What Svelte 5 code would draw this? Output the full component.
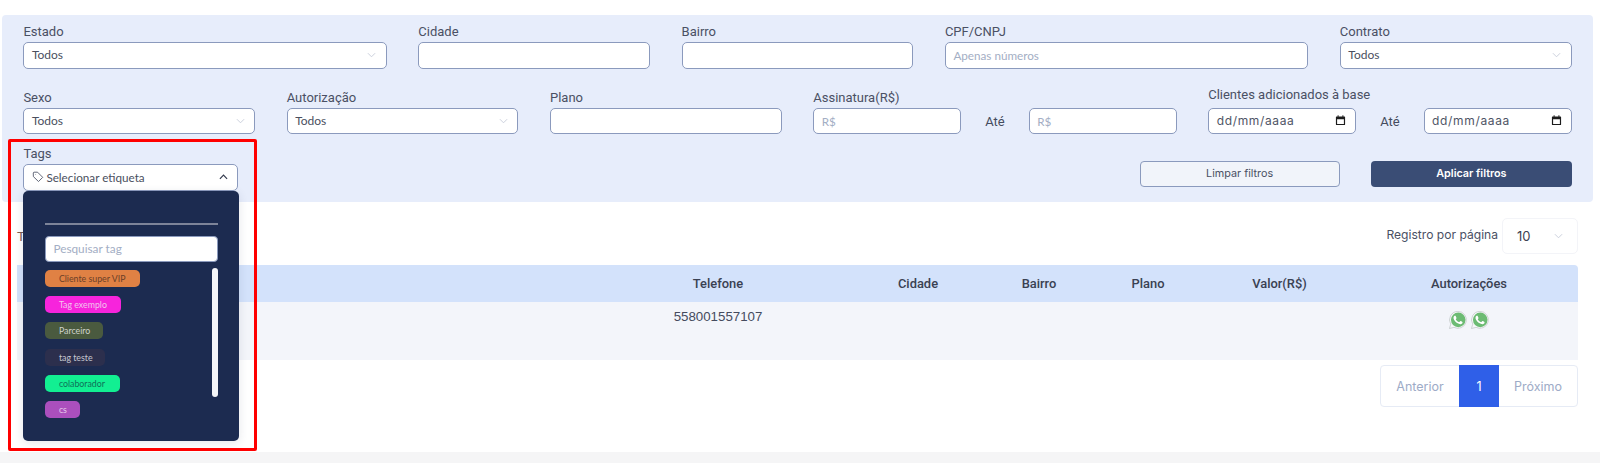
<script>
  const tags = [
    { name: 'Cliente super VIP', cls: 'orange', w: 95 },
    { name: 'Tag exemplo', cls: 'pink', w: 76 },
    { name: 'Parceiro', cls: 'olive', w: 58.5 },
    { name: 'tag teste', cls: 'slate', w: 60 },
    { name: 'colaborador', cls: 'green', w: 75 },
    { name: 'cs', cls: 'purple', w: 35.5 }
  ];
  const heads = ['', 'Telefone', 'Cidade', 'Bairro', 'Plano', 'Valor(R$)', 'Autorizações'];
</script>

{#snippet chevron()}
  <svg class="chev" viewBox="0 0 10 6" aria-hidden="true"><path d="M1 1l4 4 4-4" /></svg>
{/snippet}

{#snippet calendar()}
  <svg class="cal" viewBox="0 0 12 12" aria-hidden="true">
    <path d="M1 2.2c0-.4.3-.7.7-.7h8.6c.4 0 .7.3.7.7v8.1c0 .4-.3.7-.7.7H1.700c-.4 0-.7-.3-.7-.7zM2.300 4.600v5.100h7.400V4.600z" />
    <rect x="2.800" y=".4" width="1.200" height="1.600" /><rect x="8" y=".4" width="1.200" height="1.600" />
  </svg>
{/snippet}

{#snippet whatsapp()}
  <svg class="wa" viewBox="0 0 24 24" aria-hidden="true">
    <path class="wa-rim" d="M12 .5A11.300 11.300 0 0 0 2.300 17.600L.6 23.400l6-1.600A11.300 11.300 0 1 0 12 .5z" />
    <circle class="wa-fill" cx="12.300" cy="11.800" r="9.700" />
    <path class="wa-phone" d="M17.472 14.382c-.297-.149-1.758-.867-2.03-.967-.273-.099-.471-.148-.67.15-.197.297-.767.966-.94 1.164-.173.199-.347.223-.644.075-.297-.15-1.255-.463-2.39-1.475-.883-.788-1.48-1.761-1.653-2.059-.173-.297-.018-.458.13-.606.134-.133.298-.347.446-.52.149-.174.198-.298.298-.497.099-.198.05-.371-.025-.52-.075-.149-.669-1.612-.916-2.207-.242-.579-.487-.5-.669-.51-.173-.008-.371-.01-.57-.01-.198 0-.52.074-.792.372-.272.297-1.04 1.016-1.04 2.479 0 1.462 1.065 2.875 1.213 3.074.149.198 2.096 3.2 5.077 4.487.709.306 1.262.489 1.694.625.712.227 1.36.195 1.871.118.571-.085 1.758-.719 2.006-1.413.248-.694.248-1.289.173-1.413-.074-.124-.272-.198-.57-.347z" />
  </svg>
{/snippet}

<div class="page">
  <section class="filters">
    <div class="row first">
      <div class="field c3"><span class="label">Estado</span><div class="control select"><span>Todos</span>{@render chevron()}</div></div>
      <div class="field c2"><span class="label">Cidade</span><div class="control"></div></div>
      <div class="field c2"><span class="label">Bairro</span><div class="control"></div></div>
      <div class="field c3"><span class="label">CPF/CNPJ</span><div class="control ph">Apenas números</div></div>
      <div class="field c2"><span class="label">Contrato</span><div class="control select"><span>Todos</span>{@render chevron()}</div></div>
    </div>
    <div class="row second">
      <div class="field c2"><span class="label">Sexo</span><div class="control select"><span>Todos</span>{@render chevron()}</div></div>
      <div class="field c2"><span class="label">Autorização</span><div class="control select"><span>Todos</span>{@render chevron()}</div></div>
      <div class="field c2"><span class="label">Plano</span><div class="control"></div></div>
      <div class="field c3">
        <span class="label">Assinatura(R$)</span>
        <div class="range">
          <div class="control ph">R$</div><span class="ate">Até</span><div class="control ph">R$</div>
        </div>
      </div>
      <div class="field c3">
        <span class="label raised">Clientes adicionados à base</span>
        <div class="range">
          <div class="control date"><span>dd/mm/aaaa</span>{@render calendar()}</div><span class="ate">Até</span><div class="control date"><span>dd/mm/aaaa</span>{@render calendar()}</div>
        </div>
      </div>
    </div>
    <div class="third">
      <div class="field tags">
        <span class="label">Tags</span>
        <div class="control tag-select">
          <svg class="tag-icon" viewBox="0 0 14 14" aria-hidden="true"><path d="M1.500 2.300c0-.5.4-.9.9-.9h4.100l6 6-4.900 4.900-6-5.800z" /><circle cx="4.300" cy="4.200" r=".5" /></svg>
          <span>Selecionar etiqueta</span>
          <svg class="chev up" viewBox="0 0 10 6" aria-hidden="true"><path d="M1 5l4-4 4 4" /></svg>
        </div>
        <div class="menu">
          <hr />
          <div class="search">Pesquisar tag</div>
          <div class="tag-list">
            {#each tags as t}
              <span class="pill {t.cls}" style="width:{t.w}px">{t.name}</span>
            {/each}
            <span class="thumb"></span>
          </div>
        </div>
      </div>
      <div class="actions">
        <button class="clear">Limpar filtros</button>
        <button class="apply">Aplicar filtros</button>
      </div>
    </div>
  </section>

  <div class="toolbar">
    <span class="total">Total: 1</span>
    <div class="per-page">
      <span class="per-label">Registro por página</span>
      <div class="page-size"><span>10</span>{@render chevron()}</div>
    </div>
  </div>

  <div class="table">
    <div class="tr thead">
      {#each heads as h}<div class="th">{h}</div>{/each}
    </div>
    <div class="tr tbody">
      <div class="td"></div>
      <div class="td">558001557107</div>
      <div class="td"></div><div class="td"></div><div class="td"></div><div class="td"></div>
      <div class="td icons">{@render whatsapp()}{@render whatsapp()}</div>
    </div>
  </div>

  <nav class="pager">
    <span class="pg prev">Anterior</span>
    <span class="pg current">1</span>
    <span class="pg next">Próximo</span>
  </nav>

  <div class="highlight"></div>
</div>
<div class="strip"></div>

<style>
  :global(body) { margin: 0; background: #fff; }
  .page {
    position: relative;
    height: 451.700px;
    padding: 15px 0 0 2px;
    box-sizing: border-box;
    font-family: Roboto, "Liberation Sans", sans-serif;
    color: #454b5e;
  }
  .strip { height: 11.300px; background: #f5f5f6; }
  .filters {
    width: 1591px;
    height: 187px;
    box-sizing: border-box;
    padding: 6.700px 21.400px 0;
    background: #e7edfb;
    border-radius: 4px;
  }
  .row { display: grid; grid-template-columns: repeat(12, 1fr); column-gap: 31.500px; }
  .second { margin-top: 19px; }
  .c2 { grid-column: span 2; }
  .c3 { grid-column: span 3; }
  .field { display: flex; flex-direction: column; min-width: 0; }
  .label { height: 20px; margin-bottom: .600px; font-size: 13px; line-height: 20px; white-space: nowrap; color: #4a5064; }
  .raised { position: relative; top: -3px; }
  .control {
    display: flex;
    align-items: center;
    height: 26.300px;
    box-sizing: border-box;
    padding: 0 7.500px 1px;
    background: #fff;
    border: 1.300px solid #8b9abd;
    border-radius: 5px;
    font-family: Lato, sans-serif;
    font-size: 12px;
    color: #4a4f5e;
  }
  .select { justify-content: space-between; }
  .ph { color: #a3aec4; font-size: 11.700px; }
  .chev { width: 9px; height: 6px; margin-right: 2px; flex: none; fill: none; stroke: #c5cbd8; stroke-width: 1; }
  .range { display: grid; grid-template-columns: 148px 1fr 148px; align-items: center; }
  .ate { text-align: center; font-size: 13px; color: #454b5e; }
  .date { justify-content: space-between; padding-right: 9px; font-family: Inter, sans-serif; font-size: 12px; color: #4f5566; letter-spacing: .65px; }
  .cal { width: 11px; height: 11px; fill: #1c1c1c; flex: none; }
  .third { display: flex; justify-content: space-between; align-items: flex-end; margin-top: 9.400px; }
  .tags { position: relative; width: 214.600px; z-index: 2; }
  .tag-select { gap: 2.500px; padding: 0 9px 1px 7.500px; font-size: 11.700px; }
  .tag-icon { width: 12px; height: 12px; flex: none; fill: none; stroke: #4a5064; stroke-width: 1; }
  .tag-icon circle { fill: #4a5064; stroke: none; }
  .up { margin-left: auto; margin-right: 0; stroke: #333a4d; stroke-width: 1.300; }
  .menu {
    position: absolute;
    left: 0;
    top: 46.700px;
    width: 216px;
    height: 250.500px;
    box-sizing: border-box;
    padding: 32px 21.500px 0;
    background: #1c2b50;
    border-radius: 5px;
    box-shadow: 0 2px 10px rgba(40, 50, 80, .12);
  }
  .menu hr { margin: 0; height: 2px; border: 0; background: #7d8499; }
  .search {
    display: flex;
    align-items: center;
    height: 25.300px;
    margin-top: 11.800px;
    box-sizing: border-box;
    padding: 0 7.500px;
    background: #fff;
    border: 1px solid #8b9abd;
    border-radius: 4px;
    font-family: Lato, sans-serif;
    font-size: 11.800px;
    color: #a3aec4;
  }
  .tag-list { position: relative; display: flex; flex-direction: column; align-items: flex-start; gap: 9.300px; margin-top: 8px; }
  .pill {
    display: block;
    height: 17px;
    box-sizing: border-box;
    padding-left: 14px;
    border-radius: 5px;
    font-family: Lato, sans-serif;
    font-size: 8.800px;
    line-height: 17px;
    white-space: nowrap;
  }
  .orange { background: #e08144; color: #6b3f28; }
  .pink { background: #f724dc; color: #f3c4ef; }
  .olive { background: #4a5a3f; color: #ced3cc; }
  .slate { background: #2c2f4d; color: #c6c7d0; }
  .green { background: #12ef92; color: #0f6f58; }
  .purple { background: #ab4fbd; color: #e6cbeb; }
  .thumb { position: absolute; right: 0; top: -1.600px; width: 6px; height: 129.300px; border-radius: 3px; background: #f4f5f8; }
  .actions { display: flex; gap: 31.500px; margin-bottom: 4px; }
  .actions button { height: 26px; border-radius: 4px; font-family: Inter, sans-serif; font-size: 10.800px; }
  .clear { width: 200px; margin-left: 1px; background: #f1f4fa; border: 1px solid #8b9abd; color: #4a5064; }
  .apply { width: 200.500px; background: #3a4d75; border: 0; color: #fff; font-weight: 600; }
  .toolbar { display: flex; justify-content: space-between; align-items: center; width: 1561px; margin: 16.300px 0 0 15px; height: 36px; }
  .total { font-size: 13.500px; color: #7c5a50; }
  .per-page { display: flex; align-items: center; gap: 4px; font-family: Inter, sans-serif; font-size: 12.100px; color: #4a5064; }
  .per-label { margin-bottom: 3px; }
  .page-size { display: flex; align-items: center; justify-content: space-between; width: 76px; height: 36px; box-sizing: border-box; padding: 0 12px 0 14px; border: 1px solid #f3f4f8; border-radius: 5px; font-size: 13px; color: #3b4152; }
  .table { width: 1561px; margin: 10.700px 0 0 15px; }
  .tr { display: grid; grid-template-columns: 564px 274px 126px 116px 102px 161px 218px; }
  .thead { height: 37.300px; background: #d3e2fb; border-radius: 0 4px 0 0; align-items: center; }
  .th { text-align: center; font-size: 12.900px; font-weight: 500; color: #3a4152; }
  .tbody { height: 57.700px; background: #f3f5fa; }
  .td { padding-top: 7px; text-align: center; font-family: "Liberation Sans", sans-serif; font-size: 13.300px; line-height: 16px; color: #454b5e; }
  .icons { display: flex; justify-content: center; gap: 4px; padding-top: 8.500px; }
  .wa { width: 18px; height: 18px; }
  .wa-rim { fill: #f6f7f9; stroke: #b5bcbc; stroke-width: .8; }
  .wa-fill { fill: #6cbb73; }
  .wa-phone { fill: #fff; }
  .pager {
    display: flex;
    width: 198px;
    height: 42.300px;
    margin: 5px 0 0 1378px;
    box-sizing: border-box;
    border: 1px solid #e6ebf5;
    border-radius: 4px;
    font-family: Inter, sans-serif;
    font-size: 12.500px;
    color: #9dabc7;
  }
  .pg { display: flex; align-items: center; justify-content: center; }
  .prev { width: 78px; }
  .current { width: 40px; margin: -1px 0; background: #2f5fe8; color: #fff; }
  .next { flex: 1; }
  .highlight {
    position: absolute;
    left: 7.500px;
    top: 139.300px;
    width: 249.500px;
    height: 311.400px;
    box-sizing: border-box;
    border: 3px solid #ff0000;
    border-radius: 2px;
    z-index: 3;
    pointer-events: none;
  }
</style>
